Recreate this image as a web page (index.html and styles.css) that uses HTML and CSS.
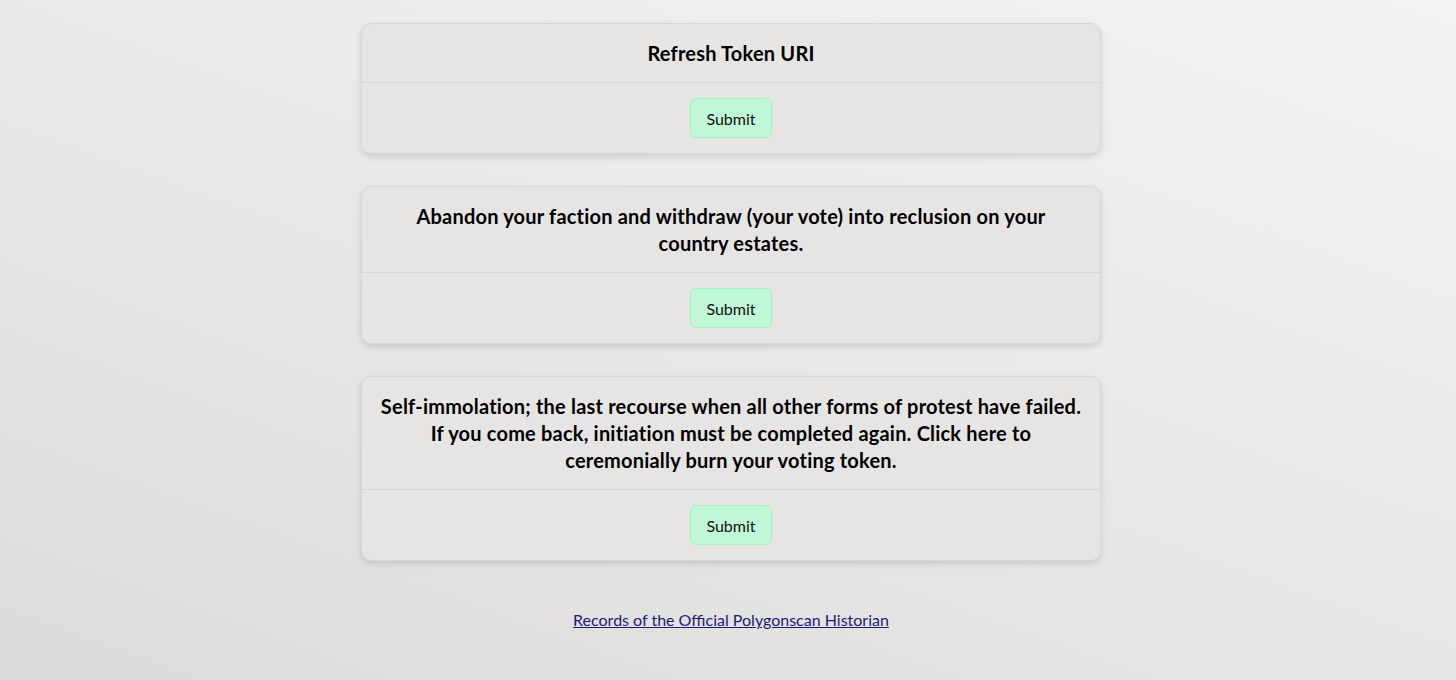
FILE: index.html
```html
<!DOCTYPE html>
<html lang="en">
<head>
    <meta charset="UTF-8">
    <meta name="viewport" content="width=device-width, initial-scale=1.0">
    <title>Faction Actions</title>
    <link rel="stylesheet" href="styles.css">
</head>
<body>
    <div class="container">
        <div class="card">
            <div class="card-header">Refresh Token URI</div>
            <div class="card-body">
                <button class="button">Submit</button>
            </div>
        </div>
        <div class="card">
            <div class="card-header">Abandon your faction and withdraw (your vote) into reclusion on your<br>
                country estates.</div>
            <div class="card-body">
                <button class="button">Submit</button>
            </div>
        </div>
        <div class="card">
            <div class="card-header">Self-immolation; the last recourse when all other forms of protest have failed.<br>
                If you come back, initiation must be completed again. Click here to<br>
                ceremonially burn your voting token.</div>
            <div class="card-body">
                <button class="button">Submit</button>
            </div>
        </div>
        <p class="footer">
            <a href="#">Records of the Official Polygonscan Historian</a>
        </p>
    </div>
</body>
</html>
```

FILE: styles.css
```css
html {
    min-height: 100%;
    background: linear-gradient(20deg, #dcdbda 0%, #e9e8e7 50%, #f3f2f1 100%);
}
body {
    margin: 0;
    padding-left: 6px;
    font-family: "Segoe UI", Lato, "Noto Sans", sans-serif;
    color: #000;
}
.container {
    width: 740px;
    margin: 0 auto;
    padding-top: 23px;
    display: flex;
    flex-direction: column;
    gap: 32px;
}
.card {
    background-color: #e6e5e4;
    border: 1px solid #d6d6db;
    border-radius: 10px;
    box-shadow: 0 3px 6px rgba(0, 0, 0, 0.12);
}
.card-header {
    padding: 16px 12px 15px;
    text-align: center;
    font-size: 20px;
    font-weight: bold;
    letter-spacing: 0.2px;
    line-height: 27px;
    border-bottom: 1px solid #d6d6db;
}
.card-body {
    padding: 15px;
    display: flex;
    justify-content: center;
}
.button {
    font-family: inherit;
    background-color: #c0f7d6;
    color: #111;
    border: 1px solid #a6efc2;
    border-radius: 6px;
    padding: 0 15px;
    height: 40px;
    font-size: 16px;
    cursor: pointer;
}
.footer {
    margin: 17px 0 0;
    text-align: center;
    font-size: 16px;
}
.footer a {
    color: #1c1c78;
}
```
